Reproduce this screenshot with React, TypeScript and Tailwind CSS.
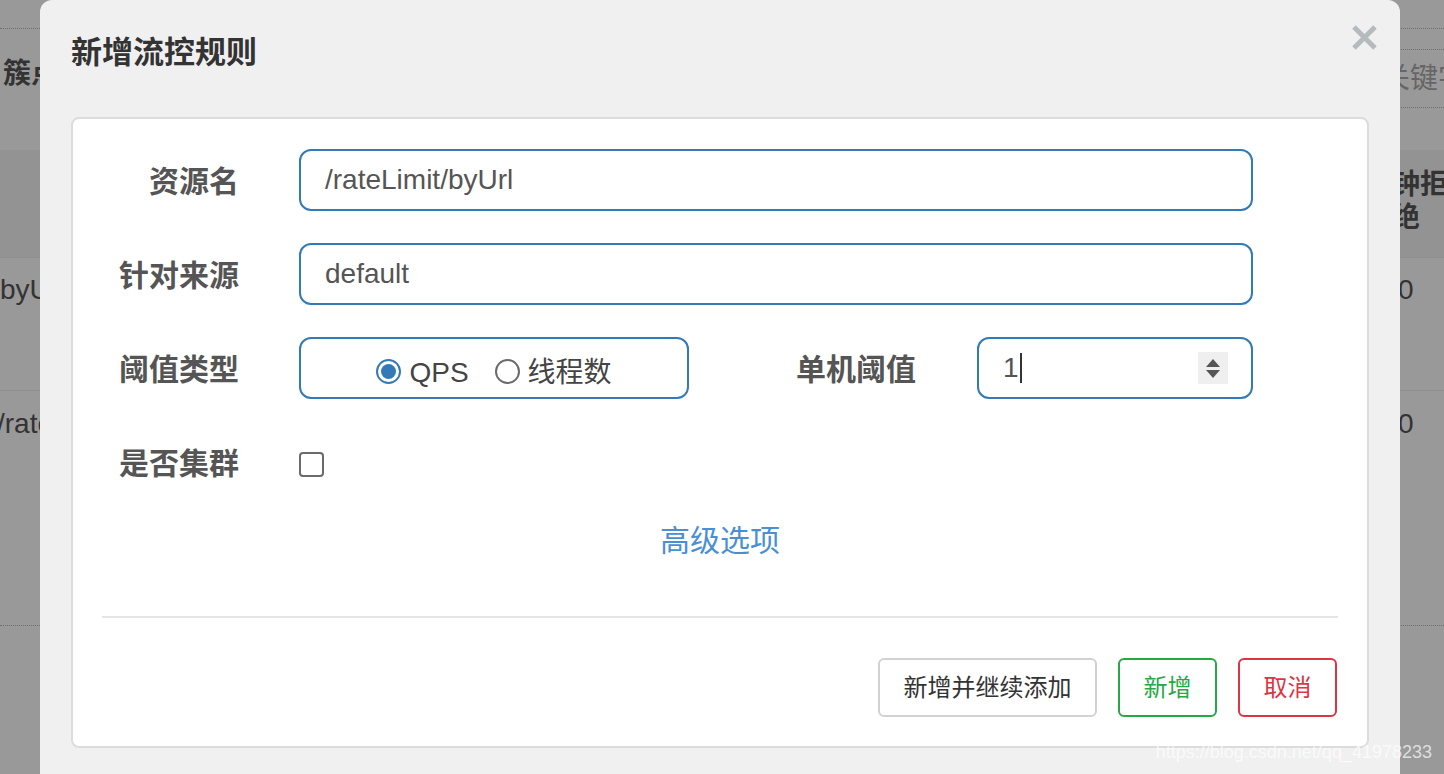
import React from "react";

const FONT = { fontFamily: "'Liberation Sans', 'Noto Sans CJK SC', sans-serif" };

function Radio({ checked, label }: { checked: boolean; label: string }) {
  return (
    <div className="mt-[6px] flex items-center gap-[8px]">
      <span
        className={
          checked
            ? "flex h-[25px] w-[25px] items-center justify-center rounded-full border-2 border-[#337ab7] bg-white"
            : "flex h-[25px] w-[25px] items-center justify-center rounded-full border-2 border-[#6b6b6b] bg-white"
        }
      >
        {checked && <span className="h-[15px] w-[15px] rounded-full bg-[#337ab7]" />}
      </span>
      <span className="pt-[3px] text-[28px] leading-[32px] text-[#444]">{label}</span>
    </div>
  );
}

function Label({ text, w }: { text: string; w: string }) {
  return (
    <div className={`${w} shrink-0 pt-[4px] text-right text-[30px] font-bold leading-[36px] text-[#555]`}>{text}</div>
  );
}

export default function App() {
  return (
    <div className="relative h-[774px] w-[1444px] overflow-hidden bg-[#999]" style={FONT}>
      {/* background page */}
      <div className="flex flex-col">
        <div className="h-[29px] border-b border-dotted border-[#6e6e6e]" />
        <div className="flex h-[121px] items-start justify-between">
          <div className="mt-[27px] pl-[3px] text-[28px] font-bold leading-[36px] text-[#333] whitespace-nowrap">簇点链路</div>
          <div className="mt-[20px] flex h-[59px] w-[80px] items-center border-y border-dotted border-[#6e6e6e] pl-[18px] text-[28px] leading-[32px] text-[#666] whitespace-nowrap">
            关键字
          </div>
        </div>
        <div className="flex h-[107px] items-start justify-between bg-[#939393]">
          <div />
          <div className="mt-[18px] w-[52px] whitespace-nowrap text-[28px] font-bold leading-[33px] text-[#333]">
            <div>钟拒</div>
            <div>绝</div>
          </div>
        </div>
        <div className="flex h-[133px] items-start justify-between border-t border-[#8d8d8d]">
          <div className="mt-[14px] text-[28px] leading-[36px] text-[#333]">byUrl</div>
          <div className="mt-[14px] w-[46px] text-[28px] leading-[36px] text-[#333]">0</div>
        </div>
        <div className="flex h-[235px] items-start justify-between border-t border-[#8d8d8d]">
          <div className="-ml-[3px] mt-[15px] text-[28px] leading-[36px] text-[#333]">/rateLimit</div>
          <div className="mt-[15px] w-[46px] text-[28px] leading-[36px] text-[#333]">0</div>
        </div>
        <div className="border-t border-dotted border-[#6e6e6e]" />
      </div>

      {/* modal */}
      <div className="absolute left-[40px] top-0 flex h-[800px] w-[1360px] flex-col rounded-[12px] bg-[#f0f0f0]">
        <div className="flex h-[104px] items-start justify-between">
          <div className="mt-[36px] pl-[31px] text-[31px] font-bold leading-[34px] text-[#333]">新增流控规则</div>
          <button className="mr-[22px] mt-[24px] flex h-[27px] w-[27px] items-center justify-center">
            <svg width="27" height="27" viewBox="0 0 27 27">
              <path d="M3 3 L24 24 M24 3 L3 24" stroke="#b5babd" strokeWidth="5" strokeLinecap="butt" />
            </svg>
          </button>
        </div>

        <div className="mx-[31px] mt-[13px] flex flex-col rounded-[8px] border-2 border-[#dcdcdc] bg-white pb-[29px] pt-[30px]">
          <div className="flex flex-col gap-[32px] pr-[114px]">
            <div className="flex h-[62px] items-center gap-[60px]">
              <Label text="资源名" w="w-[166px]" />
              <div className="flex h-[62px] flex-1 items-center rounded-[12px] border-2 border-[#337ab7] pl-[24px] text-[28px] text-[#555]">
                /rateLimit/byUrl
              </div>
            </div>
            <div className="flex h-[62px] items-center gap-[60px]">
              <Label text="针对来源" w="w-[166px]" />
              <div className="flex h-[62px] flex-1 items-center rounded-[12px] border-2 border-[#337ab7] pl-[24px] text-[28px] text-[#555]">
                default
              </div>
            </div>
            <div className="flex h-[62px] items-center">
              <Label text="阈值类型" w="w-[166px]" />
              <div className="ml-[60px] flex h-[62px] w-[390px] shrink-0 items-center justify-center gap-[26px] rounded-[12px] border-2 border-[#337ab7]">
                <Radio checked label="QPS" />
                <Radio checked={false} label="线程数" />
              </div>
              <Label text="单机阈值" w="w-[227px]" />
              <div className="ml-[61px] flex h-[62px] flex-1 items-center justify-between rounded-[12px] border-2 border-[#337ab7] pl-[24px] pr-[23px]">
                <div className="flex items-center text-[28px] text-[#555]">
                  <span>1</span>
                  <span className="ml-[1px] h-[30px] w-[2px] bg-[#333]" />
                </div>
                <div className="flex h-[32px] w-[30px] flex-col items-center justify-center gap-[3px] bg-[#efefef]">
                  <svg width="14" height="8" viewBox="0 0 14 8">
                    <path d="M7 0 L14 8 L0 8 Z" fill="#555" />
                  </svg>
                  <svg width="14" height="8" viewBox="0 0 14 8">
                    <path d="M0 0 L14 0 L7 8 Z" fill="#555" />
                  </svg>
                </div>
              </div>
            </div>
            <div className="flex h-[62px] items-center gap-[60px]">
              <Label text="是否集群" w="w-[166px]" />
              <span className="mt-[4px] h-[25px] w-[25px] rounded-[4px] border-2 border-[#6b6b6b] bg-white" />
            </div>
          </div>

          <div className="mt-[28px] flex h-[40px] items-center justify-center text-[30px] leading-[40px] text-[#4a8fd4]">
            高级选项
          </div>

          <div className="mx-[29px] mt-[55px] h-[2px] bg-[#e6e6e6]" />

          <div className="mt-[40px] flex justify-end gap-[21px] pr-[30px]">
            <button className="flex h-[59px] w-[219px] items-center justify-center rounded-[6px] border-2 border-[#d2d2d2] bg-white text-[24px] text-[#333]">
              新增并继续添加
            </button>
            <button className="flex h-[59px] w-[99px] items-center justify-center rounded-[6px] border-2 border-[#28a745] bg-white text-[24px] text-[#28a745]">
              新增
            </button>
            <button className="flex h-[59px] w-[99px] items-center justify-center rounded-[6px] border-2 border-[#dc3545] bg-white text-[24px] text-[#dc3545]">
              取消
            </button>
          </div>
        </div>
      </div>

      {/* watermark */}
      <div className="absolute bottom-[12px] right-[12px] text-[18px] leading-[20px] text-white/70">
        https://blog.csdn.net/qq_41978233
      </div>
    </div>
  );
}
